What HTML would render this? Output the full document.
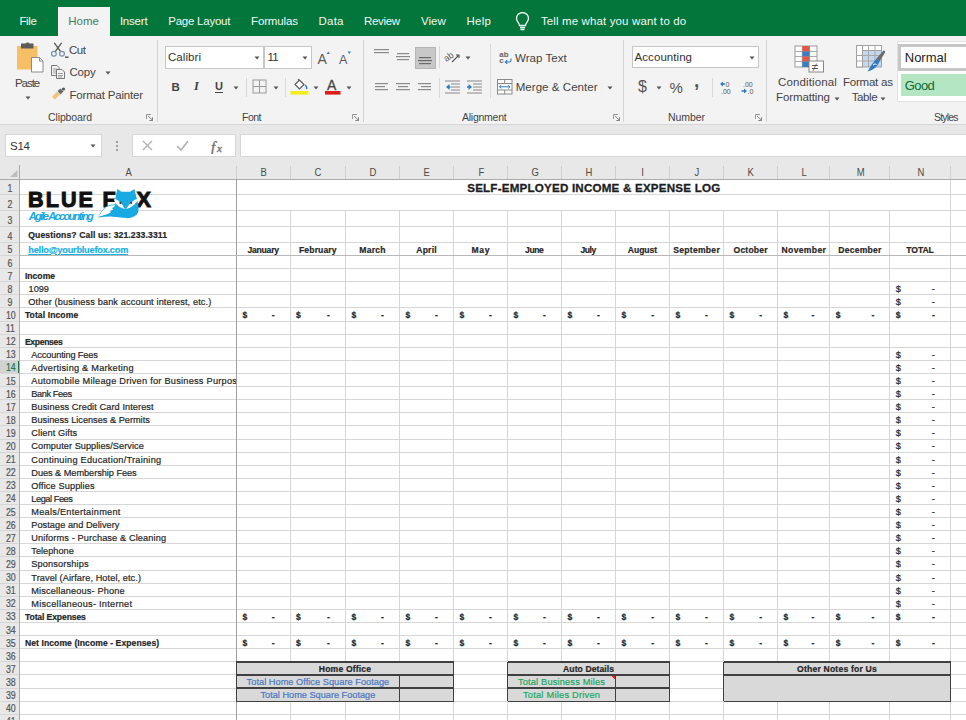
<!DOCTYPE html>
<html><head><meta charset="utf-8"><style>
html,body{margin:0;padding:0;}
body{width:966px;height:720px;overflow:hidden;position:relative;background:#fff;font-family:'Liberation Sans', sans-serif;}
</style></head><body>
<div style="position:absolute;left:0px;top:0px;width:966px;height:36px;background:#03763C;"></div><div style="position:absolute;left:58px;top:7px;width:52px;height:29px;background:#F3F3F3;"></div><div style="position:absolute;top:15.97px;font-size:11.5px;line-height:11.5px;font-weight:400;color:#F2F8F4;white-space:pre;letter-spacing:-0.410px;left:19.50px;">File</div><div style="position:absolute;top:15.97px;font-size:11.5px;line-height:11.5px;font-weight:400;color:#F2F8F4;white-space:pre;letter-spacing:-0.213px;left:119.90px;">Insert</div><div style="position:absolute;top:15.97px;font-size:11.5px;line-height:11.5px;font-weight:400;color:#F2F8F4;white-space:pre;letter-spacing:-0.249px;left:168.30px;">Page Layout</div><div style="position:absolute;top:15.97px;font-size:11.5px;line-height:11.5px;font-weight:400;color:#F2F8F4;white-space:pre;letter-spacing:-0.134px;left:251.00px;">Formulas</div><div style="position:absolute;top:15.97px;font-size:11.5px;line-height:11.5px;font-weight:400;color:#F2F8F4;white-space:pre;letter-spacing:0.201px;left:318.60px;">Data</div><div style="position:absolute;top:15.97px;font-size:11.5px;line-height:11.5px;font-weight:400;color:#F2F8F4;white-space:pre;letter-spacing:-0.344px;left:364.00px;">Review</div><div style="position:absolute;top:15.97px;font-size:11.5px;line-height:11.5px;font-weight:400;color:#F2F8F4;white-space:pre;letter-spacing:0.027px;left:421.00px;">View</div><div style="position:absolute;top:15.97px;font-size:11.5px;line-height:11.5px;font-weight:400;color:#F2F8F4;white-space:pre;letter-spacing:0.281px;left:466.50px;">Help</div><div style="position:absolute;top:15.97px;font-size:11.5px;line-height:11.5px;font-weight:400;color:#F2F8F4;white-space:pre;letter-spacing:0.130px;left:540.90px;">Tell me what you want to do</div><div style="position:absolute;top:15.97px;font-size:11.5px;line-height:11.5px;font-weight:400;color:#457C62;white-space:pre;letter-spacing:0.038px;left:68.20px;">Home</div><svg style="position:absolute;left:514px;top:12px" width="17" height="20" viewBox="0 0 17 20"><path d="M5.5 13.5 C5.5 11 2.5 9.5 2.5 6.5 A6 6 0 0 1 14.5 6.5 C14.5 9.5 11.5 11 11.5 13.5 Z" fill="none" stroke="#F2F8F4" stroke-width="1.3"/><path d="M6 15.5 H11 M6.5 17.5 H10.5" stroke="#F2F8F4" stroke-width="1.3"/></svg><div style="position:absolute;left:0px;top:36px;width:966px;height:88px;background:#F3F3F3;"></div><div style="position:absolute;left:0px;top:123.5px;width:966px;height:1.2px;background:#D6D6D6;"></div><div style="position:absolute;left:157px;top:40px;width:1px;height:82px;background:#D4D4D4;"></div><div style="position:absolute;left:363px;top:40px;width:1px;height:82px;background:#D4D4D4;"></div><div style="position:absolute;left:623px;top:40px;width:1px;height:82px;background:#D4D4D4;"></div><div style="position:absolute;left:766px;top:40px;width:1px;height:82px;background:#D4D4D4;"></div><svg style="position:absolute;left:14px;top:41px" width="32" height="33" viewBox="0 0 32 33">
<rect x="3" y="5" width="20.5" height="23.5" fill="#F6BF65"/>
<rect x="7" y="2.5" width="12.5" height="5" fill="#5B5B5B"/>
<rect x="11.5" y="1.5" width="4" height="3" rx="1.5" fill="#5B5B5B"/>
<path d="M17.5 16.5 H25.5 L29 20 V31 H17.5 Z" fill="#fff" stroke="#8C8C8C" stroke-width="1"/>
<path d="M25.5 16.5 V20 H29" fill="none" stroke="#8C8C8C" stroke-width="1"/>
</svg><div style="position:absolute;top:77.57px;font-size:11.5px;line-height:11.5px;font-weight:400;color:#444444;white-space:pre;letter-spacing:-1.055px;left:15.00px;">Paste</div><svg style="position:absolute;left:25px;top:96px" width="6" height="4"><path d="M0.5 0.5 H5.5 L3 3.5 Z" fill="#555"/></svg><svg style="position:absolute;left:50px;top:42px" width="20" height="16" viewBox="0 0 20 16">
<path d="M4.3 0.8 L10.8 9.8 M11.6 0.8 L5.1 9.8" stroke="#555" stroke-width="1.3"/>
<circle cx="3.9" cy="11.8" r="2.4" fill="none" stroke="#7B97AC" stroke-width="1.3"/>
<circle cx="12" cy="11.8" r="2.4" fill="none" stroke="#7B97AC" stroke-width="1.3"/>
<rect x="15" y="14.5" width="3.5" height="1.3" fill="#444"/>
</svg><div style="position:absolute;top:45.07px;font-size:11.5px;line-height:11.5px;font-weight:400;color:#444444;white-space:pre;letter-spacing:-0.453px;left:69.00px;">Cut</div><svg style="position:absolute;left:50px;top:64px" width="16" height="16" viewBox="0 0 16 16">
<path d="M1.5 1.5 H7 L9 3.5 V11.5 H1.5 Z" fill="#F3F3F3" stroke="#777" stroke-width="1"/>
<path d="M3 5 H7 M3 7 H7 M3 9 H6" stroke="#888" stroke-width="0.8"/>
<path d="M6.5 5.5 H12 L14.5 8 V14.5 H6.5 Z" fill="#F3F3F3" stroke="#777" stroke-width="1"/>
<path d="M8 9.5 H13 M8 11.5 H13 M8 13 H12" stroke="#888" stroke-width="0.8"/>
</svg><div style="position:absolute;top:66.87px;font-size:11.5px;line-height:11.5px;font-weight:400;color:#444444;white-space:pre;letter-spacing:-0.220px;left:69.50px;">Copy</div><svg style="position:absolute;left:105px;top:71px" width="6" height="4"><path d="M0.5 0.5 H5.5 L3 3.5 Z" fill="#555"/></svg><svg style="position:absolute;left:51px;top:87px" width="15" height="13" viewBox="0 0 15 13">
<path d="M1 10 L6 4.5 L9 7.5 L4 12.5 Z" fill="#F2C27A"/>
<path d="M6.5 4 L9.5 1.5 L12.5 4.5 L9.5 7.5 Z" fill="#6B6B6B"/>
<circle cx="12.5" cy="2" r="1.6" fill="#555"/>
</svg><div style="position:absolute;top:90.07px;font-size:11.5px;line-height:11.5px;font-weight:400;color:#444444;white-space:pre;letter-spacing:-0.197px;left:69.50px;">Format Painter</div><div style="position:absolute;top:111.61px;font-size:10.5px;line-height:10.5px;font-weight:400;color:#444444;white-space:pre;letter-spacing:-0.119px;left:48.00px;">Clipboard</div><svg style="position:absolute;left:146px;top:114px" width="8" height="7" viewBox="0 0 8 7"><path d="M0.5 5 V0.5 H5" stroke="#8A8A8A" stroke-width="0.9" fill="none"/><path d="M2 2 L6.5 6.2 M6.5 3.3 V6.5 H3.3" stroke="#777" stroke-width="0.9" fill="none"/></svg><div style="position:absolute;left:165px;top:46px;width:99px;height:22.5px;background:#FFFFFF;box-sizing:border-box;border:1px solid #C6C6C6;"></div><div style="position:absolute;left:264px;top:46px;width:48px;height:22.5px;background:#FFFFFF;box-sizing:border-box;border:1px solid #C6C6C6;"></div><div style="position:absolute;top:52.07px;font-size:11.5px;line-height:11.5px;font-weight:400;color:#333;white-space:pre;letter-spacing:0.068px;left:168.00px;">Calibri</div><div style="position:absolute;top:52.07px;font-size:11.5px;line-height:11.5px;font-weight:400;color:#333;white-space:pre;letter-spacing:-0.953px;left:267.60px;">11</div><svg style="position:absolute;left:254px;top:56px" width="6" height="4"><path d="M0.5 0.5 H5.5 L3 3.5 Z" fill="#555"/></svg><svg style="position:absolute;left:302px;top:56px" width="6" height="4"><path d="M0.5 0.5 H5.5 L3 3.5 Z" fill="#555"/></svg><svg style="position:absolute;left:316px;top:50px" width="38" height="16" viewBox="0 0 38 16">
<text x="1.5" y="13.5" font-family="Liberation Sans" font-size="14" fill="#5A5A5A">A</text>
<path d="M10.5 4 L12.3 1.5 L14 4 Z" fill="#3A7EC1"/>
<text x="23" y="14" font-family="Liberation Sans" font-size="12.5" fill="#5A5A5A">A</text>
<path d="M31.5 1.5 L33.3 4 L35 1.5 Z" fill="#3A7EC1"/>
</svg><div style="position:absolute;top:81.77px;font-size:11.5px;line-height:11.5px;font-weight:700;color:#444;white-space:pre;left:171.50px;">B</div><div style="position:absolute;left:194px;top:80px;font-family:'Liberation Serif';font-style:italic;font-size:12.5px;line-height:12.5px;color:#444;font-weight:bold">I</div><div style="position:absolute;top:81.19px;font-size:11px;line-height:11px;font-weight:700;color:#444;white-space:pre;text-decoration:underline;text-decoration-thickness:1px;text-underline-offset:1.5px;left:215.00px;">U</div><svg style="position:absolute;left:233px;top:86px" width="6" height="4"><path d="M0.5 0.5 H5.5 L3 3.5 Z" fill="#555"/></svg><div style="position:absolute;left:246px;top:78px;width:1px;height:19px;background:#D9D9D9;"></div><svg style="position:absolute;left:252px;top:79px" width="15" height="15" viewBox="0 0 15 15">
<rect x="1" y="1" width="13" height="13" fill="none" stroke="#9A9A9A" stroke-width="1"/>
<path d="M7.5 1 V14 M1 7.5 H14" stroke="#9A9A9A" stroke-width="1"/></svg><svg style="position:absolute;left:273px;top:86px" width="6" height="4"><path d="M0.5 0.5 H5.5 L3 3.5 Z" fill="#555"/></svg><div style="position:absolute;left:285px;top:78px;width:1px;height:19px;background:#D9D9D9;"></div><svg style="position:absolute;left:290px;top:78px" width="20" height="18" viewBox="0 0 20 18">
<path d="M5 6.5 L9.5 2 L14 6.5 L9.5 11 Z" fill="#fff" stroke="#555" stroke-width="1.1"/>
<path d="M8 1 L9.5 3" stroke="#555" stroke-width="1.1"/>
<path d="M15 7 Q17.5 9 16.5 11" stroke="#3A7EC1" stroke-width="1.5" fill="none"/>
<rect x="0.5" y="13" width="18" height="3.6" fill="#F2EE1A"/></svg><svg style="position:absolute;left:313px;top:86px" width="6" height="4"><path d="M0.5 0.5 H5.5 L3 3.5 Z" fill="#555"/></svg><svg style="position:absolute;left:324px;top:78px" width="18" height="18" viewBox="0 0 18 18">
<text x="3" y="12" font-family="Liberation Sans" font-size="14" fill="#444" stroke="#444" stroke-width="0.3">A</text>
<rect x="1" y="13" width="15.5" height="3.6" fill="#E01B1B"/></svg><svg style="position:absolute;left:346px;top:86px" width="6" height="4"><path d="M0.5 0.5 H5.5 L3 3.5 Z" fill="#555"/></svg><div style="position:absolute;top:111.61px;font-size:10.5px;line-height:10.5px;font-weight:400;color:#444444;white-space:pre;letter-spacing:-0.505px;left:242.00px;">Font</div><svg style="position:absolute;left:352px;top:114px" width="8" height="7" viewBox="0 0 8 7"><path d="M0.5 5 V0.5 H5" stroke="#8A8A8A" stroke-width="0.9" fill="none"/><path d="M2 2 L6.5 6.2 M6.5 3.3 V6.5 H3.3" stroke="#777" stroke-width="0.9" fill="none"/></svg><div style="position:absolute;left:414.5px;top:46.5px;width:21px;height:22px;background:#C8C8C8;box-sizing:border-box;border:1px solid #B4B4B4;"></div><svg style="position:absolute;left:374px;top:48px" width="15" height="16"><rect x="0" y="1" width="15" height="1.2" fill="#8A8A8A"/><rect x="0" y="4" width="15" height="1.2" fill="#8A8A8A"/></svg><svg style="position:absolute;left:396px;top:51px" width="14" height="16"><rect x="1" y="2" width="12" height="1.2" fill="#8A8A8A"/><rect x="0" y="5" width="14" height="1.2" fill="#8A8A8A"/><rect x="1" y="8" width="12" height="1.2" fill="#8A8A8A"/></svg><svg style="position:absolute;left:418px;top:53px" width="14" height="16"><rect x="1" y="4" width="12" height="1.2" fill="#6A6A6A"/><rect x="0" y="7" width="14" height="1.2" fill="#6A6A6A"/><rect x="1" y="10" width="12" height="1.2" fill="#6A6A6A"/></svg><svg style="position:absolute;left:444px;top:49px" width="18" height="16" viewBox="0 0 18 16">
<text x="0" y="10" font-family="Liberation Sans" font-size="9" fill="#555" transform="rotate(-35 6 8)">ab</text>
<path d="M8 13 L15 6 M12 6 H15 V9" stroke="#555" stroke-width="1.1" fill="none"/></svg><svg style="position:absolute;left:465px;top:56px" width="6" height="4"><path d="M0.5 0.5 H5.5 L3 3.5 Z" fill="#555"/></svg><div style="position:absolute;left:439px;top:46px;width:1px;height:22px;background:#D9D9D9;"></div><div style="position:absolute;left:439px;top:78px;width:1px;height:20px;background:#D9D9D9;"></div><div style="position:absolute;left:490px;top:44px;width:1px;height:54px;background:#D9D9D9;"></div><svg style="position:absolute;left:375px;top:82px" width="14" height="16"><rect x="0" y="1" width="13" height="1.2" fill="#8A8A8A"/><rect x="0" y="4" width="10" height="1.2" fill="#8A8A8A"/><rect x="0" y="7" width="13" height="1.2" fill="#8A8A8A"/></svg><svg style="position:absolute;left:396px;top:82px" width="14" height="16"><rect x="0" y="1" width="14" height="1.2" fill="#8A8A8A"/><rect x="2" y="4" width="10" height="1.2" fill="#8A8A8A"/><rect x="0" y="7" width="14" height="1.2" fill="#8A8A8A"/></svg><svg style="position:absolute;left:418px;top:82px" width="14" height="16"><rect x="0" y="1" width="13" height="1.2" fill="#8A8A8A"/><rect x="3" y="4" width="10" height="1.2" fill="#8A8A8A"/><rect x="0" y="7" width="13" height="1.2" fill="#8A8A8A"/></svg><svg style="position:absolute;left:445px;top:80px" width="16" height="14" viewBox="0 0 16 14">
<path d="M0 1 H15 M6 4 H15 M6 7 H15 M6 10 H15 M0 13 H15" stroke="#888" stroke-width="1"/>
<path d="M1 7 L4.5 4 V10 Z" fill="#2F7BC0"/><path d="M3 7 H5.5" stroke="#2F7BC0" stroke-width="1.5"/></svg><svg style="position:absolute;left:467px;top:80px" width="16" height="14" viewBox="0 0 16 14">
<path d="M0 1 H15 M6 4 H15 M6 7 H15 M6 10 H15 M0 13 H15" stroke="#888" stroke-width="1"/>
<path d="M5 7 L1.5 4 V10 Z" fill="#2F7BC0"/><path d="M0 7 H3" stroke="#2F7BC0" stroke-width="1.5"/></svg><svg style="position:absolute;left:498px;top:50px" width="16" height="16" viewBox="0 0 16 16">
<text x="1.3" y="7" font-family="Liberation Sans" font-size="8" font-weight="bold" fill="#666">ab</text>
<text x="1.3" y="13" font-family="Liberation Sans" font-size="8" font-weight="bold" fill="#666">c</text>
<path d="M13 8.5 V10.5 Q13 12 11.5 12 H7.5 M9.3 10.2 L7.3 12 L9.3 13.8" stroke="#2F7BC0" stroke-width="1.1" fill="none"/></svg><div style="position:absolute;top:52.77px;font-size:11.5px;line-height:11.5px;font-weight:400;color:#444444;white-space:pre;letter-spacing:0.055px;left:515.00px;">Wrap Text</div><svg style="position:absolute;left:497px;top:79px" width="16" height="16" viewBox="0 0 16 16">
<rect x="0.5" y="0.5" width="14.5" height="14.5" fill="#fff" stroke="#888" stroke-width="1"/>
<path d="M0.5 4.5 H15 M0.5 11 H15 M7.7 0.5 V4.5 M7.7 11 V15" stroke="#888" stroke-width="1"/>
<path d="M2.5 7.8 H13 M4.3 6.2 L2.5 7.8 L4.3 9.4 M11.2 6.2 L13 7.8 L11.2 9.4" stroke="#2F7BC0" stroke-width="1" fill="none"/></svg><div style="position:absolute;top:82.47px;font-size:11.5px;line-height:11.5px;font-weight:400;color:#444444;white-space:pre;letter-spacing:0.055px;left:515.70px;">Merge &amp; Center</div><svg style="position:absolute;left:607px;top:86px" width="6" height="4"><path d="M0.5 0.5 H5.5 L3 3.5 Z" fill="#555"/></svg><div style="position:absolute;top:111.61px;font-size:10.5px;line-height:10.5px;font-weight:400;color:#444444;white-space:pre;letter-spacing:-0.250px;left:462.00px;">Alignment</div><svg style="position:absolute;left:613px;top:114px" width="8" height="7" viewBox="0 0 8 7"><path d="M0.5 5 V0.5 H5" stroke="#8A8A8A" stroke-width="0.9" fill="none"/><path d="M2 2 L6.5 6.2 M6.5 3.3 V6.5 H3.3" stroke="#777" stroke-width="0.9" fill="none"/></svg><div style="position:absolute;left:632px;top:46.3px;width:127px;height:22px;background:#FFFFFF;box-sizing:border-box;border:1px solid #C6C6C6;"></div><div style="position:absolute;top:51.97px;font-size:11.5px;line-height:11.5px;font-weight:400;color:#333;white-space:pre;letter-spacing:0.055px;left:634.60px;">Accounting</div><svg style="position:absolute;left:749px;top:56px" width="6" height="4"><path d="M0.5 0.5 H5.5 L3 3.5 Z" fill="#555"/></svg><div style="position:absolute;top:79.46px;font-size:16px;line-height:16px;font-weight:400;color:#555;white-space:pre;letter-spacing:-0.406px;left:638.00px;">$</div><svg style="position:absolute;left:656px;top:86px" width="6" height="4"><path d="M0.5 0.5 H5.5 L3 3.5 Z" fill="#555"/></svg><div style="position:absolute;top:80.30px;font-size:15px;line-height:15px;font-weight:400;color:#555;white-space:pre;letter-spacing:-0.344px;left:669.50px;">%</div><div style="position:absolute;top:70.92px;font-size:19px;line-height:19px;font-weight:700;color:#555;white-space:pre;left:694.00px;">,</div><div style="position:absolute;left:712px;top:78px;width:1px;height:19px;background:#D9D9D9;"></div><svg style="position:absolute;left:719px;top:80px" width="14" height="15" viewBox="0 0 14 15">
<path d="M1 4 L4 1.5 V6.5 Z" fill="#2F7BC0"/><path d="M3 4 H6" stroke="#2F7BC0" stroke-width="1.5"/>
<text x="6.5" y="7" font-family="Liberation Sans" font-size="7" fill="#555">0</text>
<text x="2" y="14" font-family="Liberation Sans" font-size="7" fill="#555">.00</text></svg><svg style="position:absolute;left:741px;top:80px" width="14" height="15" viewBox="0 0 14 15">
<text x="2" y="7" font-family="Liberation Sans" font-size="7" fill="#555">.00</text>
<path d="M6 11 L3 8.5 V13.5 Z" transform="translate(0,0)" fill="#2F7BC0"/>
<path d="M0.5 11 H4" stroke="#2F7BC0" stroke-width="1.5"/>
<text x="6.5" y="14" font-family="Liberation Sans" font-size="7" fill="#555">.0</text></svg><div style="position:absolute;top:111.61px;font-size:10.5px;line-height:10.5px;font-weight:400;color:#444444;white-space:pre;letter-spacing:-0.072px;left:668.00px;">Number</div><svg style="position:absolute;left:755px;top:114px" width="8" height="7" viewBox="0 0 8 7"><path d="M0.5 5 V0.5 H5" stroke="#8A8A8A" stroke-width="0.9" fill="none"/><path d="M2 2 L6.5 6.2 M6.5 3.3 V6.5 H3.3" stroke="#777" stroke-width="0.9" fill="none"/></svg><svg style="position:absolute;left:794px;top:45px" width="32" height="28" viewBox="0 0 32 28">
<rect x="1" y="1" width="22" height="21" fill="#fff" stroke="#999" stroke-width="1"/>
<path d="M1 6.5 H23 M1 11.5 H23 M1 16.5 H23 M8.3 1 V22 M15.6 1 V22" stroke="#AAA" stroke-width="1"/>
<rect x="8.3" y="1" width="7.3" height="5.5" fill="#E2574C"/>
<rect x="8.3" y="6.5" width="7.3" height="5" fill="#3A7EC1"/>
<rect x="8.3" y="11.5" width="7.3" height="5" fill="#E2574C"/>
<rect x="8.3" y="16.5" width="7.3" height="5.5" fill="#3A7EC1"/>
<rect x="15" y="16" width="14.5" height="11" fill="#fff" stroke="#888" stroke-width="1"/>
<text x="17.8" y="25.5" font-family="Liberation Sans" font-size="12" fill="#555">≠</text></svg><div style="position:absolute;top:77.27px;font-size:11.5px;line-height:11.5px;font-weight:400;color:#444444;white-space:pre;letter-spacing:0.125px;left:778.00px;">Conditional</div><div style="position:absolute;top:92.07px;font-size:11.5px;line-height:11.5px;font-weight:400;color:#444444;white-space:pre;letter-spacing:-0.108px;left:776.00px;">Formatting</div><svg style="position:absolute;left:834px;top:97px" width="6" height="4"><path d="M0.5 0.5 H5.5 L3 3.5 Z" fill="#555"/></svg><svg style="position:absolute;left:854px;top:44px" width="34" height="30" viewBox="0 0 34 30">
<rect x="2.5" y="1.5" width="25" height="21.5" fill="#C5D7EC" stroke="#A0A0A0" stroke-width="1"/>
<rect x="2.5" y="1.5" width="25" height="5" fill="#fff" stroke="#A0A0A0" stroke-width="1"/>
<rect x="2.5" y="1.5" width="6" height="21.5" fill="#fff" stroke="#A0A0A0" stroke-width="1"/>
<path d="M2.5 11.5 H27.5 M2.5 17 H27.5 M14.5 1.5 V23 M21 1.5 V23" stroke="#A8A8A8" stroke-width="1"/>
<path d="M22.5 14.5 L29.5 6.5 Q31.5 6 31 8.5 L25.5 17.5 Z" fill="#6B6B6B"/>
<path d="M22.5 14.5 L25.5 17.5 Q22.5 25.5 13.5 27.5 Q17 21 22.5 14.5 Z" fill="#2F7BC0"/>
<path d="M19 21 Q21.5 19 22.5 20.5" stroke="#fff" stroke-width="1" fill="none"/>
</svg><div style="position:absolute;top:77.27px;font-size:11.5px;line-height:11.5px;font-weight:400;color:#444444;white-space:pre;letter-spacing:-0.221px;left:843.00px;">Format as</div><div style="position:absolute;top:92.07px;font-size:11.5px;line-height:11.5px;font-weight:400;color:#444444;white-space:pre;letter-spacing:-0.375px;left:851.70px;">Table</div><svg style="position:absolute;left:880px;top:97px" width="6" height="4"><path d="M0.5 0.5 H5.5 L3 3.5 Z" fill="#555"/></svg><div style="position:absolute;left:897px;top:41px;width:69px;height:61px;background:#FFFFFF;box-sizing:border-box;border:1px solid #E1E1E1;border-right:none;"></div><div style="position:absolute;left:897.5px;top:44px;width:69px;height:27px;background:#FFFFFF;box-sizing:border-box;border:3px solid #C6C6C6;border-right:none;"></div><div style="position:absolute;top:51.30px;font-size:13px;line-height:13px;font-weight:400;color:#222;white-space:pre;letter-spacing:-0.021px;left:904.80px;">Normal</div><div style="position:absolute;left:900.5px;top:74px;width:66px;height:22px;background:#B5E6C3;"></div><div style="position:absolute;top:78.80px;font-size:13px;line-height:13px;font-weight:400;color:#0B6B34;white-space:pre;letter-spacing:-0.604px;left:904.80px;">Good</div><div style="position:absolute;top:111.61px;font-size:10.5px;line-height:10.5px;font-weight:400;color:#444444;white-space:pre;letter-spacing:-0.819px;left:934.00px;">Styles</div><div style="position:absolute;left:0px;top:124.7px;width:966px;height:40.3px;background:#E8E8E8;"></div><div style="position:absolute;left:5px;top:134px;width:97px;height:23px;background:#FFFFFF;box-sizing:border-box;border:1px solid #D6D6D6;"></div><div style="position:absolute;top:140.77px;font-size:11.5px;line-height:11.5px;font-weight:400;color:#333;white-space:pre;letter-spacing:-0.234px;left:10.00px;">S14</div><svg style="position:absolute;left:90px;top:144px" width="6" height="4"><path d="M0.5 0.5 H5.5 L3 3.5 Z" fill="#555"/></svg><div style="position:absolute;left:116px;top:141px;width:2px;height:2px;background:#A0A0A0;"></div><div style="position:absolute;left:116px;top:145px;width:2px;height:2px;background:#A0A0A0;"></div><div style="position:absolute;left:116px;top:149px;width:2px;height:2px;background:#A0A0A0;"></div><div style="position:absolute;left:132px;top:134px;width:104px;height:23px;background:#FFFFFF;box-sizing:border-box;border:1px solid #D6D6D6;"></div><svg style="position:absolute;left:140px;top:138px" width="90" height="16" viewBox="0 0 90 16">
<path d="M3 3 L12 12 M12 3 L3 12" stroke="#B0B0B0" stroke-width="1.3"/>
<path d="M37 8 L41 12 L48 3" stroke="#B0B0B0" stroke-width="1.5" fill="none"/>
<text x="71" y="13.5" font-family="Liberation Serif" font-style="italic" font-size="15" fill="#6A6A6A" stroke="#6A6A6A" stroke-width="0.3">f</text>
<text x="77" y="13.5" font-family="Liberation Serif" font-style="italic" font-size="11" fill="#6A6A6A" stroke="#6A6A6A" stroke-width="0.3">x</text></svg><div style="position:absolute;left:239.5px;top:134px;width:730px;height:23px;background:#FFFFFF;box-sizing:border-box;border:1px solid #D6D6D6;"></div><div style="position:absolute;left:0px;top:165px;width:966px;height:14px;background:#E8E8E8;"></div><div style="position:absolute;left:0px;top:179px;width:19.5px;height:541px;background:#E8E8E8;"></div><div style="position:absolute;left:0px;top:360.372px;width:18px;height:13.108000000000004px;background:#D2D2D2;"></div><div style="position:absolute;left:18px;top:360.372px;width:2.2px;height:13.108000000000004px;background:#217346;"></div><div style="position:absolute;left:20px;top:179px;width:946px;height:541px;background:#FFFFFF;"></div><svg style="position:absolute;left:0;top:0" width="966" height="720" shape-rendering="crispEdges"><rect x="0.00" y="193.90" width="966.00" height="1" fill="#D6D6D6"/><rect x="0.00" y="210.00" width="966.00" height="1" fill="#D6D6D6"/><rect x="0.00" y="226.00" width="966.00" height="1" fill="#D6D6D6"/><rect x="0.00" y="241.90" width="966.00" height="1" fill="#D6D6D6"/><rect x="0.00" y="255.01" width="966.00" height="1" fill="#D6D6D6"/><rect x="0.00" y="268.12" width="966.00" height="1" fill="#D6D6D6"/><rect x="0.00" y="281.22" width="966.00" height="1" fill="#D6D6D6"/><rect x="0.00" y="294.33" width="966.00" height="1" fill="#D6D6D6"/><rect x="0.00" y="307.44" width="966.00" height="1" fill="#D6D6D6"/><rect x="0.00" y="320.55" width="966.00" height="1" fill="#D6D6D6"/><rect x="0.00" y="333.66" width="966.00" height="1" fill="#D6D6D6"/><rect x="0.00" y="346.76" width="966.00" height="1" fill="#D6D6D6"/><rect x="0.00" y="359.87" width="966.00" height="1" fill="#D6D6D6"/><rect x="0.00" y="372.98" width="966.00" height="1" fill="#D6D6D6"/><rect x="0.00" y="386.09" width="966.00" height="1" fill="#D6D6D6"/><rect x="0.00" y="399.20" width="966.00" height="1" fill="#D6D6D6"/><rect x="0.00" y="412.30" width="966.00" height="1" fill="#D6D6D6"/><rect x="0.00" y="425.41" width="966.00" height="1" fill="#D6D6D6"/><rect x="0.00" y="438.52" width="966.00" height="1" fill="#D6D6D6"/><rect x="0.00" y="451.63" width="966.00" height="1" fill="#D6D6D6"/><rect x="0.00" y="464.74" width="966.00" height="1" fill="#D6D6D6"/><rect x="0.00" y="477.84" width="966.00" height="1" fill="#D6D6D6"/><rect x="0.00" y="490.95" width="966.00" height="1" fill="#D6D6D6"/><rect x="0.00" y="504.06" width="966.00" height="1" fill="#D6D6D6"/><rect x="0.00" y="517.17" width="966.00" height="1" fill="#D6D6D6"/><rect x="0.00" y="530.28" width="966.00" height="1" fill="#D6D6D6"/><rect x="0.00" y="543.38" width="966.00" height="1" fill="#D6D6D6"/><rect x="0.00" y="556.49" width="966.00" height="1" fill="#D6D6D6"/><rect x="0.00" y="569.60" width="966.00" height="1" fill="#D6D6D6"/><rect x="0.00" y="582.71" width="966.00" height="1" fill="#D6D6D6"/><rect x="0.00" y="595.82" width="966.00" height="1" fill="#D6D6D6"/><rect x="0.00" y="608.92" width="966.00" height="1" fill="#D6D6D6"/><rect x="0.00" y="622.03" width="966.00" height="1" fill="#D6D6D6"/><rect x="0.00" y="635.14" width="966.00" height="1" fill="#D6D6D6"/><rect x="0.00" y="648.25" width="966.00" height="1" fill="#D6D6D6"/><rect x="0.00" y="661.36" width="966.00" height="1" fill="#D6D6D6"/><rect x="0.00" y="674.46" width="966.00" height="1" fill="#D6D6D6"/><rect x="0.00" y="687.57" width="966.00" height="1" fill="#D6D6D6"/><rect x="0.00" y="700.68" width="966.00" height="1" fill="#D6D6D6"/><rect x="0.00" y="713.79" width="966.00" height="1" fill="#D6D6D6"/><rect x="0.00" y="726.90" width="966.00" height="1" fill="#D6D6D6"/><rect x="289.60" y="210.50" width="1" height="509.50" fill="#D6D6D6"/><rect x="345.00" y="210.50" width="1" height="509.50" fill="#D6D6D6"/><rect x="398.90" y="210.50" width="1" height="509.50" fill="#D6D6D6"/><rect x="453.00" y="210.50" width="1" height="509.50" fill="#D6D6D6"/><rect x="507.00" y="210.50" width="1" height="509.50" fill="#D6D6D6"/><rect x="560.90" y="210.50" width="1" height="509.50" fill="#D6D6D6"/><rect x="614.90" y="210.50" width="1" height="509.50" fill="#D6D6D6"/><rect x="669.10" y="210.50" width="1" height="509.50" fill="#D6D6D6"/><rect x="723.00" y="210.50" width="1" height="509.50" fill="#D6D6D6"/><rect x="777.10" y="210.50" width="1" height="509.50" fill="#D6D6D6"/><rect x="829.30" y="210.50" width="1" height="509.50" fill="#D6D6D6"/><rect x="889.30" y="210.50" width="1" height="509.50" fill="#D6D6D6"/><rect x="949.80" y="179.00" width="1" height="541.00" fill="#D6D6D6"/><rect x="235.90" y="166.00" width="1" height="13.00" fill="#CFCFCF"/><rect x="289.60" y="166.00" width="1" height="13.00" fill="#CFCFCF"/><rect x="345.00" y="166.00" width="1" height="13.00" fill="#CFCFCF"/><rect x="398.90" y="166.00" width="1" height="13.00" fill="#CFCFCF"/><rect x="453.00" y="166.00" width="1" height="13.00" fill="#CFCFCF"/><rect x="507.00" y="166.00" width="1" height="13.00" fill="#CFCFCF"/><rect x="560.90" y="166.00" width="1" height="13.00" fill="#CFCFCF"/><rect x="614.90" y="166.00" width="1" height="13.00" fill="#CFCFCF"/><rect x="669.10" y="166.00" width="1" height="13.00" fill="#CFCFCF"/><rect x="723.00" y="166.00" width="1" height="13.00" fill="#CFCFCF"/><rect x="777.10" y="166.00" width="1" height="13.00" fill="#CFCFCF"/><rect x="829.30" y="166.00" width="1" height="13.00" fill="#CFCFCF"/><rect x="889.30" y="166.00" width="1" height="13.00" fill="#CFCFCF"/><rect x="949.80" y="166.00" width="1" height="13.00" fill="#CFCFCF"/><rect x="0.00" y="178.50" width="966.00" height="1" fill="#ABABAB"/><rect x="19.00" y="165.00" width="1" height="555.00" fill="#ABABAB"/><rect x="235.80" y="179.00" width="1.2" height="541.00" fill="#9E9E9E"/><rect x="19.50" y="255.01" width="946.50" height="1" fill="#B8B8B8"/><rect x="236.40" y="661.86" width="217.10" height="39.32" fill="#D9D9D9"/><rect x="236.40" y="661.21" width="217.10" height="1.3" fill="#404040"/><rect x="236.40" y="674.31" width="217.10" height="1.3" fill="#404040"/><rect x="235.75" y="661.86" width="1.3" height="13.11" fill="#404040"/><rect x="452.85" y="661.21" width="1.3" height="14.41" fill="#404040"/><rect x="236.40" y="674.31" width="163.00" height="1.3" fill="#404040"/><rect x="236.40" y="687.42" width="163.00" height="1.3" fill="#404040"/><rect x="235.75" y="674.96" width="1.3" height="13.11" fill="#404040"/><rect x="398.75" y="674.31" width="1.3" height="14.41" fill="#404040"/><rect x="399.40" y="674.31" width="54.10" height="1.3" fill="#404040"/><rect x="399.40" y="687.42" width="54.10" height="1.3" fill="#404040"/><rect x="398.75" y="674.96" width="1.3" height="13.11" fill="#404040"/><rect x="452.85" y="674.31" width="1.3" height="14.41" fill="#404040"/><rect x="236.40" y="687.42" width="163.00" height="1.3" fill="#404040"/><rect x="236.40" y="700.53" width="163.00" height="1.3" fill="#404040"/><rect x="235.75" y="688.07" width="1.3" height="13.11" fill="#404040"/><rect x="398.75" y="687.42" width="1.3" height="14.41" fill="#404040"/><rect x="399.40" y="687.42" width="54.10" height="1.3" fill="#404040"/><rect x="399.40" y="700.53" width="54.10" height="1.3" fill="#404040"/><rect x="398.75" y="688.07" width="1.3" height="13.11" fill="#404040"/><rect x="452.85" y="687.42" width="1.3" height="14.41" fill="#404040"/><rect x="507.50" y="661.86" width="162.10" height="39.32" fill="#D9D9D9"/><rect x="507.50" y="661.21" width="162.10" height="1.3" fill="#404040"/><rect x="507.50" y="674.31" width="162.10" height="1.3" fill="#404040"/><rect x="506.85" y="661.86" width="1.3" height="13.11" fill="#404040"/><rect x="668.95" y="661.21" width="1.3" height="14.41" fill="#404040"/><rect x="507.50" y="674.31" width="107.90" height="1.3" fill="#404040"/><rect x="507.50" y="687.42" width="107.90" height="1.3" fill="#404040"/><rect x="506.85" y="674.96" width="1.3" height="13.11" fill="#404040"/><rect x="614.75" y="674.31" width="1.3" height="14.41" fill="#404040"/><rect x="615.40" y="674.31" width="54.20" height="1.3" fill="#404040"/><rect x="615.40" y="687.42" width="54.20" height="1.3" fill="#404040"/><rect x="614.75" y="674.96" width="1.3" height="13.11" fill="#404040"/><rect x="668.95" y="674.31" width="1.3" height="14.41" fill="#404040"/><rect x="507.50" y="687.42" width="107.90" height="1.3" fill="#404040"/><rect x="507.50" y="700.53" width="107.90" height="1.3" fill="#404040"/><rect x="506.85" y="688.07" width="1.3" height="13.11" fill="#404040"/><rect x="614.75" y="687.42" width="1.3" height="14.41" fill="#404040"/><rect x="615.40" y="687.42" width="54.20" height="1.3" fill="#404040"/><rect x="615.40" y="700.53" width="54.20" height="1.3" fill="#404040"/><rect x="614.75" y="688.07" width="1.3" height="13.11" fill="#404040"/><rect x="668.95" y="687.42" width="1.3" height="14.41" fill="#404040"/><path d="M611.40 675.76 H614.90 V679.26 Z" fill="#E02020"/><rect x="723.50" y="661.86" width="226.80" height="39.32" fill="#D9D9D9"/><rect x="723.50" y="661.21" width="226.80" height="1.3" fill="#404040"/><rect x="723.50" y="674.31" width="226.80" height="1.3" fill="#404040"/><rect x="722.85" y="661.86" width="1.3" height="13.11" fill="#404040"/><rect x="949.65" y="661.21" width="1.3" height="14.41" fill="#404040"/><rect x="723.50" y="674.31" width="226.80" height="1.3" fill="#404040"/><rect x="723.50" y="700.53" width="226.80" height="1.3" fill="#404040"/><rect x="722.85" y="674.96" width="1.3" height="26.22" fill="#404040"/><rect x="949.65" y="674.31" width="1.3" height="27.52" fill="#404040"/></svg><svg style="position:absolute;left:10px;top:170px" width="8" height="8"><path d="M7.5 0 V7 H0 Z" fill="#BDBDBD"/></svg><div style="position:absolute;top:167.29px;font-size:11px;line-height:11px;font-weight:400;color:#4A4A4A;white-space:pre;transform:scaleX(0.86);transform-origin:50% 50%;left:124.79px;">A</div><div style="position:absolute;top:167.29px;font-size:11px;line-height:11px;font-weight:400;color:#4A4A4A;white-space:pre;transform:scaleX(0.86);transform-origin:50% 50%;left:260.09px;">B</div><div style="position:absolute;top:167.29px;font-size:11px;line-height:11px;font-weight:400;color:#4A4A4A;white-space:pre;transform:scaleX(0.86);transform-origin:50% 50%;left:314.38px;">C</div><div style="position:absolute;top:167.29px;font-size:11px;line-height:11px;font-weight:400;color:#4A4A4A;white-space:pre;transform:scaleX(0.86);transform-origin:50% 50%;left:369.03px;">D</div><div style="position:absolute;top:167.29px;font-size:11px;line-height:11px;font-weight:400;color:#4A4A4A;white-space:pre;transform:scaleX(0.86);transform-origin:50% 50%;left:423.29px;">E</div><div style="position:absolute;top:167.29px;font-size:11px;line-height:11px;font-weight:400;color:#4A4A4A;white-space:pre;transform:scaleX(0.86);transform-origin:50% 50%;left:477.60px;">F</div><div style="position:absolute;top:167.29px;font-size:11px;line-height:11px;font-weight:400;color:#4A4A4A;white-space:pre;transform:scaleX(0.86);transform-origin:50% 50%;left:530.77px;">G</div><div style="position:absolute;top:167.29px;font-size:11px;line-height:11px;font-weight:400;color:#4A4A4A;white-space:pre;transform:scaleX(0.86);transform-origin:50% 50%;left:584.98px;">H</div><div style="position:absolute;top:167.29px;font-size:11px;line-height:11px;font-weight:400;color:#4A4A4A;white-space:pre;transform:scaleX(0.86);transform-origin:50% 50%;left:641.18px;">I</div><div style="position:absolute;top:167.29px;font-size:11px;line-height:11px;font-weight:400;color:#4A4A4A;white-space:pre;transform:scaleX(0.86);transform-origin:50% 50%;left:694.19px;">J</div><div style="position:absolute;top:167.29px;font-size:11px;line-height:11px;font-weight:400;color:#4A4A4A;white-space:pre;transform:scaleX(0.86);transform-origin:50% 50%;left:747.39px;">K</div><div style="position:absolute;top:167.29px;font-size:11px;line-height:11px;font-weight:400;color:#4A4A4A;white-space:pre;transform:scaleX(0.86);transform-origin:50% 50%;left:801.07px;">L</div><div style="position:absolute;top:167.29px;font-size:11px;line-height:11px;font-weight:400;color:#4A4A4A;white-space:pre;transform:scaleX(0.86);transform-origin:50% 50%;left:855.86px;">M</div><div style="position:absolute;top:167.29px;font-size:11px;line-height:11px;font-weight:400;color:#4A4A4A;white-space:pre;transform:scaleX(0.86);transform-origin:50% 50%;left:916.63px;">N</div><div style="position:absolute;top:182.61px;font-size:10.5px;line-height:10.5px;font-weight:400;color:#555555;white-space:pre;-webkit-text-stroke:0.2px #555555;transform:scaleX(0.84);transform-origin:50% 50%;left:7.25px;">1</div><div style="position:absolute;top:198.71px;font-size:10.5px;line-height:10.5px;font-weight:400;color:#555555;white-space:pre;-webkit-text-stroke:0.2px #555555;transform:scaleX(0.84);transform-origin:50% 50%;left:7.25px;">2</div><div style="position:absolute;top:214.71px;font-size:10.5px;line-height:10.5px;font-weight:400;color:#555555;white-space:pre;-webkit-text-stroke:0.2px #555555;transform:scaleX(0.84);transform-origin:50% 50%;left:7.25px;">3</div><div style="position:absolute;top:230.61px;font-size:10.5px;line-height:10.5px;font-weight:400;color:#555555;white-space:pre;-webkit-text-stroke:0.2px #555555;transform:scaleX(0.84);transform-origin:50% 50%;left:7.25px;">4</div><div style="position:absolute;top:244.42px;font-size:10.5px;line-height:10.5px;font-weight:400;color:#555555;white-space:pre;-webkit-text-stroke:0.2px #555555;transform:scaleX(0.84);transform-origin:50% 50%;left:7.25px;">5</div><div style="position:absolute;top:257.53px;font-size:10.5px;line-height:10.5px;font-weight:400;color:#555555;white-space:pre;-webkit-text-stroke:0.2px #555555;transform:scaleX(0.84);transform-origin:50% 50%;left:7.25px;">6</div><div style="position:absolute;top:270.64px;font-size:10.5px;line-height:10.5px;font-weight:400;color:#555555;white-space:pre;-webkit-text-stroke:0.2px #555555;transform:scaleX(0.84);transform-origin:50% 50%;left:7.25px;">7</div><div style="position:absolute;top:283.74px;font-size:10.5px;line-height:10.5px;font-weight:400;color:#555555;white-space:pre;-webkit-text-stroke:0.2px #555555;transform:scaleX(0.84);transform-origin:50% 50%;left:7.25px;">8</div><div style="position:absolute;top:296.85px;font-size:10.5px;line-height:10.5px;font-weight:400;color:#555555;white-space:pre;-webkit-text-stroke:0.2px #555555;transform:scaleX(0.84);transform-origin:50% 50%;left:7.25px;">9</div><div style="position:absolute;top:309.96px;font-size:10.5px;line-height:10.5px;font-weight:400;color:#555555;white-space:pre;-webkit-text-stroke:0.2px #555555;transform:scaleX(0.84);transform-origin:50% 50%;left:4.79px;">10</div><div style="position:absolute;top:323.07px;font-size:10.5px;line-height:10.5px;font-weight:400;color:#555555;white-space:pre;-webkit-text-stroke:0.2px #555555;transform:scaleX(0.84);transform-origin:50% 50%;left:5.12px;">11</div><div style="position:absolute;top:336.18px;font-size:10.5px;line-height:10.5px;font-weight:400;color:#555555;white-space:pre;-webkit-text-stroke:0.2px #555555;transform:scaleX(0.84);transform-origin:50% 50%;left:4.79px;">12</div><div style="position:absolute;top:349.28px;font-size:10.5px;line-height:10.5px;font-weight:400;color:#555555;white-space:pre;-webkit-text-stroke:0.2px #555555;transform:scaleX(0.84);transform-origin:50% 50%;left:4.79px;">13</div><div style="position:absolute;top:362.39px;font-size:10.5px;line-height:10.5px;font-weight:400;color:#217346;white-space:pre;-webkit-text-stroke:0.2px #217346;transform:scaleX(0.84);transform-origin:50% 50%;left:4.79px;">14</div><div style="position:absolute;top:375.50px;font-size:10.5px;line-height:10.5px;font-weight:400;color:#555555;white-space:pre;-webkit-text-stroke:0.2px #555555;transform:scaleX(0.84);transform-origin:50% 50%;left:4.79px;">15</div><div style="position:absolute;top:388.61px;font-size:10.5px;line-height:10.5px;font-weight:400;color:#555555;white-space:pre;-webkit-text-stroke:0.2px #555555;transform:scaleX(0.84);transform-origin:50% 50%;left:4.79px;">16</div><div style="position:absolute;top:401.72px;font-size:10.5px;line-height:10.5px;font-weight:400;color:#555555;white-space:pre;-webkit-text-stroke:0.2px #555555;transform:scaleX(0.84);transform-origin:50% 50%;left:4.79px;">17</div><div style="position:absolute;top:414.82px;font-size:10.5px;line-height:10.5px;font-weight:400;color:#555555;white-space:pre;-webkit-text-stroke:0.2px #555555;transform:scaleX(0.84);transform-origin:50% 50%;left:4.79px;">18</div><div style="position:absolute;top:427.93px;font-size:10.5px;line-height:10.5px;font-weight:400;color:#555555;white-space:pre;-webkit-text-stroke:0.2px #555555;transform:scaleX(0.84);transform-origin:50% 50%;left:4.79px;">19</div><div style="position:absolute;top:441.04px;font-size:10.5px;line-height:10.5px;font-weight:400;color:#555555;white-space:pre;-webkit-text-stroke:0.2px #555555;transform:scaleX(0.84);transform-origin:50% 50%;left:4.79px;">20</div><div style="position:absolute;top:454.15px;font-size:10.5px;line-height:10.5px;font-weight:400;color:#555555;white-space:pre;-webkit-text-stroke:0.2px #555555;transform:scaleX(0.84);transform-origin:50% 50%;left:4.79px;">21</div><div style="position:absolute;top:467.26px;font-size:10.5px;line-height:10.5px;font-weight:400;color:#555555;white-space:pre;-webkit-text-stroke:0.2px #555555;transform:scaleX(0.84);transform-origin:50% 50%;left:4.79px;">22</div><div style="position:absolute;top:480.36px;font-size:10.5px;line-height:10.5px;font-weight:400;color:#555555;white-space:pre;-webkit-text-stroke:0.2px #555555;transform:scaleX(0.84);transform-origin:50% 50%;left:4.79px;">23</div><div style="position:absolute;top:493.47px;font-size:10.5px;line-height:10.5px;font-weight:400;color:#555555;white-space:pre;-webkit-text-stroke:0.2px #555555;transform:scaleX(0.84);transform-origin:50% 50%;left:4.79px;">24</div><div style="position:absolute;top:506.58px;font-size:10.5px;line-height:10.5px;font-weight:400;color:#555555;white-space:pre;-webkit-text-stroke:0.2px #555555;transform:scaleX(0.84);transform-origin:50% 50%;left:4.79px;">25</div><div style="position:absolute;top:519.69px;font-size:10.5px;line-height:10.5px;font-weight:400;color:#555555;white-space:pre;-webkit-text-stroke:0.2px #555555;transform:scaleX(0.84);transform-origin:50% 50%;left:4.79px;">26</div><div style="position:absolute;top:532.80px;font-size:10.5px;line-height:10.5px;font-weight:400;color:#555555;white-space:pre;-webkit-text-stroke:0.2px #555555;transform:scaleX(0.84);transform-origin:50% 50%;left:4.79px;">27</div><div style="position:absolute;top:545.90px;font-size:10.5px;line-height:10.5px;font-weight:400;color:#555555;white-space:pre;-webkit-text-stroke:0.2px #555555;transform:scaleX(0.84);transform-origin:50% 50%;left:4.79px;">28</div><div style="position:absolute;top:559.01px;font-size:10.5px;line-height:10.5px;font-weight:400;color:#555555;white-space:pre;-webkit-text-stroke:0.2px #555555;transform:scaleX(0.84);transform-origin:50% 50%;left:4.79px;">29</div><div style="position:absolute;top:572.12px;font-size:10.5px;line-height:10.5px;font-weight:400;color:#555555;white-space:pre;-webkit-text-stroke:0.2px #555555;transform:scaleX(0.84);transform-origin:50% 50%;left:4.79px;">30</div><div style="position:absolute;top:585.23px;font-size:10.5px;line-height:10.5px;font-weight:400;color:#555555;white-space:pre;-webkit-text-stroke:0.2px #555555;transform:scaleX(0.84);transform-origin:50% 50%;left:4.79px;">31</div><div style="position:absolute;top:598.34px;font-size:10.5px;line-height:10.5px;font-weight:400;color:#555555;white-space:pre;-webkit-text-stroke:0.2px #555555;transform:scaleX(0.84);transform-origin:50% 50%;left:4.79px;">32</div><div style="position:absolute;top:611.44px;font-size:10.5px;line-height:10.5px;font-weight:400;color:#555555;white-space:pre;-webkit-text-stroke:0.2px #555555;transform:scaleX(0.84);transform-origin:50% 50%;left:4.79px;">33</div><div style="position:absolute;top:624.55px;font-size:10.5px;line-height:10.5px;font-weight:400;color:#555555;white-space:pre;-webkit-text-stroke:0.2px #555555;transform:scaleX(0.84);transform-origin:50% 50%;left:4.79px;">34</div><div style="position:absolute;top:637.66px;font-size:10.5px;line-height:10.5px;font-weight:400;color:#555555;white-space:pre;-webkit-text-stroke:0.2px #555555;transform:scaleX(0.84);transform-origin:50% 50%;left:4.79px;">35</div><div style="position:absolute;top:650.77px;font-size:10.5px;line-height:10.5px;font-weight:400;color:#555555;white-space:pre;-webkit-text-stroke:0.2px #555555;transform:scaleX(0.84);transform-origin:50% 50%;left:4.79px;">36</div><div style="position:absolute;top:663.88px;font-size:10.5px;line-height:10.5px;font-weight:400;color:#555555;white-space:pre;-webkit-text-stroke:0.2px #555555;transform:scaleX(0.84);transform-origin:50% 50%;left:4.79px;">37</div><div style="position:absolute;top:676.98px;font-size:10.5px;line-height:10.5px;font-weight:400;color:#555555;white-space:pre;-webkit-text-stroke:0.2px #555555;transform:scaleX(0.84);transform-origin:50% 50%;left:4.79px;">38</div><div style="position:absolute;top:690.09px;font-size:10.5px;line-height:10.5px;font-weight:400;color:#555555;white-space:pre;-webkit-text-stroke:0.2px #555555;transform:scaleX(0.84);transform-origin:50% 50%;left:4.79px;">39</div><div style="position:absolute;top:703.20px;font-size:10.5px;line-height:10.5px;font-weight:400;color:#555555;white-space:pre;-webkit-text-stroke:0.2px #555555;transform:scaleX(0.84);transform-origin:50% 50%;left:4.79px;">40</div><div style="position:absolute;top:716.31px;font-size:10.5px;line-height:10.5px;font-weight:400;color:#555555;white-space:pre;-webkit-text-stroke:0.2px #555555;transform:scaleX(0.84);transform-origin:50% 50%;left:4.79px;">41</div><div style="position:absolute;top:181.98px;font-size:11.6px;line-height:11.6px;font-weight:700;color:#1E1E1E;white-space:pre;letter-spacing:0.210px;-webkit-text-stroke:0.3px #1E1E1E;left:467.20px;">SELF-EMPLOYED INCOME &amp; EXPENSE LOG</div><div style="position:absolute;top:231.12px;font-size:8.6px;line-height:8.6px;font-weight:700;color:#262626;white-space:pre;letter-spacing:0.113px;-webkit-text-stroke:0.2px #262626;left:28.30px;">Questions? Call us: 321.233.3311</div><div style="position:absolute;top:245.81px;font-size:9.2px;line-height:9.2px;font-weight:400;color:#16B2E6;white-space:pre;letter-spacing:-0.221px;-webkit-text-stroke:0.2px #16B2E6;text-decoration:underline;text-underline-offset:1px;font-weight:bold;left:28.30px;">hello@yourbluefox.com</div><div style="position:absolute;top:245.72px;font-size:8.6px;line-height:8.6px;font-weight:700;color:#262626;white-space:pre;letter-spacing:-0.211px;-webkit-text-stroke:0.2px #262626;left:247.40px;">January</div><div style="position:absolute;top:245.72px;font-size:8.6px;line-height:8.6px;font-weight:700;color:#262626;white-space:pre;letter-spacing:0.117px;-webkit-text-stroke:0.2px #262626;left:299.00px;">February</div><div style="position:absolute;top:245.72px;font-size:8.6px;line-height:8.6px;font-weight:700;color:#262626;white-space:pre;letter-spacing:0.222px;-webkit-text-stroke:0.2px #262626;left:359.35px;">March</div><div style="position:absolute;top:245.72px;font-size:8.6px;line-height:8.6px;font-weight:700;color:#262626;white-space:pre;letter-spacing:0.180px;-webkit-text-stroke:0.2px #262626;left:416.30px;">April</div><div style="position:absolute;top:245.72px;font-size:8.6px;line-height:8.6px;font-weight:700;color:#262626;white-space:pre;letter-spacing:0.641px;-webkit-text-stroke:0.2px #262626;left:471.50px;">May</div><div style="position:absolute;top:245.72px;font-size:8.6px;line-height:8.6px;font-weight:700;color:#262626;white-space:pre;letter-spacing:-0.421px;-webkit-text-stroke:0.2px #262626;left:525.05px;">June</div><div style="position:absolute;top:245.72px;font-size:8.6px;line-height:8.6px;font-weight:700;color:#262626;white-space:pre;letter-spacing:-0.434px;-webkit-text-stroke:0.2px #262626;left:580.45px;">July</div><div style="position:absolute;top:245.72px;font-size:8.6px;line-height:8.6px;font-weight:700;color:#262626;white-space:pre;letter-spacing:-0.062px;-webkit-text-stroke:0.2px #262626;left:627.85px;">August</div><div style="position:absolute;top:245.72px;font-size:8.6px;line-height:8.6px;font-weight:700;color:#262626;white-space:pre;letter-spacing:0.247px;-webkit-text-stroke:0.2px #262626;left:673.35px;">September</div><div style="position:absolute;top:245.72px;font-size:8.6px;line-height:8.6px;font-weight:700;color:#262626;white-space:pre;letter-spacing:0.158px;-webkit-text-stroke:0.2px #262626;left:733.60px;">October</div><div style="position:absolute;top:245.72px;font-size:8.6px;line-height:8.6px;font-weight:700;color:#262626;white-space:pre;letter-spacing:0.338px;-webkit-text-stroke:0.2px #262626;left:781.50px;">November</div><div style="position:absolute;top:245.72px;font-size:8.6px;line-height:8.6px;font-weight:700;color:#262626;white-space:pre;letter-spacing:0.191px;-webkit-text-stroke:0.2px #262626;left:838.35px;">December</div><div style="position:absolute;top:245.72px;font-size:8.6px;line-height:8.6px;font-weight:700;color:#262626;white-space:pre;letter-spacing:-0.065px;-webkit-text-stroke:0.2px #262626;left:906.25px;">TOTAL</div><div style="position:absolute;top:272.04px;font-size:8.6px;line-height:8.6px;font-weight:700;color:#262626;white-space:pre;letter-spacing:0.021px;-webkit-text-stroke:0.2px #262626;left:24.90px;">Income</div><div style="position:absolute;top:285.14px;font-size:9.2px;line-height:9.2px;font-weight:400;color:#262626;white-space:pre;letter-spacing:-0.018px;-webkit-text-stroke:0.2px #262626;left:28.60px;">1099</div><div style="position:absolute;top:298.25px;font-size:9.2px;line-height:9.2px;font-weight:400;color:#262626;white-space:pre;letter-spacing:0.123px;-webkit-text-stroke:0.2px #262626;left:28.30px;">Other (business bank account interest, etc.)</div><div style="position:absolute;top:311.37px;font-size:8.6px;line-height:8.6px;font-weight:700;color:#262626;white-space:pre;letter-spacing:0.084px;-webkit-text-stroke:0.2px #262626;left:24.90px;">Total Income</div><div style="position:absolute;top:337.58px;font-size:8.6px;line-height:8.6px;font-weight:700;color:#262626;white-space:pre;letter-spacing:-0.320px;-webkit-text-stroke:0.2px #262626;left:24.90px;">Expenses</div><div style="position:absolute;top:350.68px;font-size:9.2px;line-height:9.2px;font-weight:400;color:#262626;white-space:pre;letter-spacing:-0.131px;-webkit-text-stroke:0.2px #262626;left:31.30px;">Accounting Fees</div><div style="position:absolute;top:363.79px;font-size:9.2px;line-height:9.2px;font-weight:400;color:#262626;white-space:pre;letter-spacing:0.235px;-webkit-text-stroke:0.2px #262626;left:31.30px;">Advertising &amp; Marketing</div><div style="position:absolute;top:376.90px;font-size:9.2px;line-height:9.2px;font-weight:400;color:#262626;white-space:pre;letter-spacing:0.250px;-webkit-text-stroke:0.2px #262626;width:205px;overflow:hidden;left:31.30px;">Automobile Mileage Driven for Business Purpose</div><div style="position:absolute;top:390.01px;font-size:9.2px;line-height:9.2px;font-weight:400;color:#262626;white-space:pre;letter-spacing:-0.403px;-webkit-text-stroke:0.2px #262626;left:31.30px;">Bank Fees</div><div style="position:absolute;top:403.12px;font-size:9.2px;line-height:9.2px;font-weight:400;color:#262626;white-space:pre;letter-spacing:0.082px;-webkit-text-stroke:0.2px #262626;left:31.30px;">Business Credit Card Interest</div><div style="position:absolute;top:416.22px;font-size:9.2px;line-height:9.2px;font-weight:400;color:#262626;white-space:pre;letter-spacing:0.001px;-webkit-text-stroke:0.2px #262626;left:31.30px;">Business Licenses &amp; Permits</div><div style="position:absolute;top:429.33px;font-size:9.2px;line-height:9.2px;font-weight:400;color:#262626;white-space:pre;letter-spacing:0.087px;-webkit-text-stroke:0.2px #262626;left:31.30px;">Client Gifts</div><div style="position:absolute;top:442.44px;font-size:9.2px;line-height:9.2px;font-weight:400;color:#262626;white-space:pre;letter-spacing:0.049px;-webkit-text-stroke:0.2px #262626;left:31.30px;">Computer Supplies/Service</div><div style="position:absolute;top:455.55px;font-size:9.2px;line-height:9.2px;font-weight:400;color:#262626;white-space:pre;letter-spacing:0.252px;-webkit-text-stroke:0.2px #262626;left:31.30px;">Continuing Education/Training</div><div style="position:absolute;top:468.66px;font-size:9.2px;line-height:9.2px;font-weight:400;color:#262626;white-space:pre;letter-spacing:-0.039px;-webkit-text-stroke:0.2px #262626;left:31.30px;">Dues &amp; Membership Fees</div><div style="position:absolute;top:481.76px;font-size:9.2px;line-height:9.2px;font-weight:400;color:#262626;white-space:pre;letter-spacing:0.111px;-webkit-text-stroke:0.2px #262626;left:31.30px;">Office Supplies</div><div style="position:absolute;top:494.87px;font-size:9.2px;line-height:9.2px;font-weight:400;color:#262626;white-space:pre;letter-spacing:-0.430px;-webkit-text-stroke:0.2px #262626;left:31.30px;">Legal Fees</div><div style="position:absolute;top:507.98px;font-size:9.2px;line-height:9.2px;font-weight:400;color:#262626;white-space:pre;letter-spacing:0.269px;-webkit-text-stroke:0.2px #262626;left:31.30px;">Meals/Entertainment</div><div style="position:absolute;top:521.09px;font-size:9.2px;line-height:9.2px;font-weight:400;color:#262626;white-space:pre;letter-spacing:0.040px;-webkit-text-stroke:0.2px #262626;left:31.30px;">Postage and Delivery</div><div style="position:absolute;top:534.20px;font-size:9.2px;line-height:9.2px;font-weight:400;color:#262626;white-space:pre;letter-spacing:0.120px;-webkit-text-stroke:0.2px #262626;left:31.30px;">Uniforms - Purchase &amp; Cleaning</div><div style="position:absolute;top:547.30px;font-size:9.2px;line-height:9.2px;font-weight:400;color:#262626;white-space:pre;letter-spacing:0.012px;-webkit-text-stroke:0.2px #262626;left:31.30px;">Telephone</div><div style="position:absolute;top:560.41px;font-size:9.2px;line-height:9.2px;font-weight:400;color:#262626;white-space:pre;letter-spacing:0.139px;-webkit-text-stroke:0.2px #262626;left:31.30px;">Sponsorships</div><div style="position:absolute;top:573.52px;font-size:9.2px;line-height:9.2px;font-weight:400;color:#262626;white-space:pre;letter-spacing:0.082px;-webkit-text-stroke:0.2px #262626;left:31.30px;">Travel (Airfare, Hotel, etc.)</div><div style="position:absolute;top:586.63px;font-size:9.2px;line-height:9.2px;font-weight:400;color:#262626;white-space:pre;letter-spacing:0.158px;-webkit-text-stroke:0.2px #262626;left:31.30px;">Miscellaneous- Phone</div><div style="position:absolute;top:599.74px;font-size:9.2px;line-height:9.2px;font-weight:400;color:#262626;white-space:pre;letter-spacing:0.260px;-webkit-text-stroke:0.2px #262626;left:31.30px;">Miscellaneous- Internet</div><div style="position:absolute;top:612.85px;font-size:8.6px;line-height:8.6px;font-weight:700;color:#262626;white-space:pre;letter-spacing:-0.116px;-webkit-text-stroke:0.2px #262626;left:25.00px;">Total Expenses</div><div style="position:absolute;top:639.07px;font-size:8.6px;line-height:8.6px;font-weight:700;color:#262626;white-space:pre;letter-spacing:0.062px;-webkit-text-stroke:0.2px #262626;left:25.00px;">Net Income (Income - Expenses)</div><div style="position:absolute;top:311.37px;font-size:8.6px;line-height:8.6px;font-weight:700;color:#262626;white-space:pre;-webkit-text-stroke:0.2px #262626;left:242.40px;">$</div><div style="position:absolute;top:311.37px;font-size:8.6px;line-height:8.6px;font-weight:700;color:#262626;white-space:pre;-webkit-text-stroke:0.2px #262626;left:271.73px;">-</div><div style="position:absolute;top:311.37px;font-size:8.6px;line-height:8.6px;font-weight:700;color:#262626;white-space:pre;-webkit-text-stroke:0.2px #262626;left:296.10px;">$</div><div style="position:absolute;top:311.37px;font-size:8.6px;line-height:8.6px;font-weight:700;color:#262626;white-space:pre;-webkit-text-stroke:0.2px #262626;left:327.12px;">-</div><div style="position:absolute;top:311.37px;font-size:8.6px;line-height:8.6px;font-weight:700;color:#262626;white-space:pre;-webkit-text-stroke:0.2px #262626;left:351.50px;">$</div><div style="position:absolute;top:311.37px;font-size:8.6px;line-height:8.6px;font-weight:700;color:#262626;white-space:pre;-webkit-text-stroke:0.2px #262626;left:381.02px;">-</div><div style="position:absolute;top:311.37px;font-size:8.6px;line-height:8.6px;font-weight:700;color:#262626;white-space:pre;-webkit-text-stroke:0.2px #262626;left:405.40px;">$</div><div style="position:absolute;top:311.37px;font-size:8.6px;line-height:8.6px;font-weight:700;color:#262626;white-space:pre;-webkit-text-stroke:0.2px #262626;left:435.12px;">-</div><div style="position:absolute;top:311.37px;font-size:8.6px;line-height:8.6px;font-weight:700;color:#262626;white-space:pre;-webkit-text-stroke:0.2px #262626;left:459.50px;">$</div><div style="position:absolute;top:311.37px;font-size:8.6px;line-height:8.6px;font-weight:700;color:#262626;white-space:pre;-webkit-text-stroke:0.2px #262626;left:489.12px;">-</div><div style="position:absolute;top:311.37px;font-size:8.6px;line-height:8.6px;font-weight:700;color:#262626;white-space:pre;-webkit-text-stroke:0.2px #262626;left:513.50px;">$</div><div style="position:absolute;top:311.37px;font-size:8.6px;line-height:8.6px;font-weight:700;color:#262626;white-space:pre;-webkit-text-stroke:0.2px #262626;left:543.02px;">-</div><div style="position:absolute;top:311.37px;font-size:8.6px;line-height:8.6px;font-weight:700;color:#262626;white-space:pre;-webkit-text-stroke:0.2px #262626;left:567.40px;">$</div><div style="position:absolute;top:311.37px;font-size:8.6px;line-height:8.6px;font-weight:700;color:#262626;white-space:pre;-webkit-text-stroke:0.2px #262626;left:597.02px;">-</div><div style="position:absolute;top:311.37px;font-size:8.6px;line-height:8.6px;font-weight:700;color:#262626;white-space:pre;-webkit-text-stroke:0.2px #262626;left:621.40px;">$</div><div style="position:absolute;top:311.37px;font-size:8.6px;line-height:8.6px;font-weight:700;color:#262626;white-space:pre;-webkit-text-stroke:0.2px #262626;left:651.23px;">-</div><div style="position:absolute;top:311.37px;font-size:8.6px;line-height:8.6px;font-weight:700;color:#262626;white-space:pre;-webkit-text-stroke:0.2px #262626;left:675.60px;">$</div><div style="position:absolute;top:311.37px;font-size:8.6px;line-height:8.6px;font-weight:700;color:#262626;white-space:pre;-webkit-text-stroke:0.2px #262626;left:705.12px;">-</div><div style="position:absolute;top:311.37px;font-size:8.6px;line-height:8.6px;font-weight:700;color:#262626;white-space:pre;-webkit-text-stroke:0.2px #262626;left:729.50px;">$</div><div style="position:absolute;top:311.37px;font-size:8.6px;line-height:8.6px;font-weight:700;color:#262626;white-space:pre;-webkit-text-stroke:0.2px #262626;left:759.23px;">-</div><div style="position:absolute;top:311.37px;font-size:8.6px;line-height:8.6px;font-weight:700;color:#262626;white-space:pre;-webkit-text-stroke:0.2px #262626;left:783.60px;">$</div><div style="position:absolute;top:311.37px;font-size:8.6px;line-height:8.6px;font-weight:700;color:#262626;white-space:pre;-webkit-text-stroke:0.2px #262626;left:811.42px;">-</div><div style="position:absolute;top:311.37px;font-size:8.6px;line-height:8.6px;font-weight:700;color:#262626;white-space:pre;-webkit-text-stroke:0.2px #262626;left:835.80px;">$</div><div style="position:absolute;top:311.37px;font-size:8.6px;line-height:8.6px;font-weight:700;color:#262626;white-space:pre;-webkit-text-stroke:0.2px #262626;left:871.42px;">-</div><div style="position:absolute;top:311.37px;font-size:8.6px;line-height:8.6px;font-weight:700;color:#262626;white-space:pre;-webkit-text-stroke:0.2px #262626;left:895.80px;">$</div><div style="position:absolute;top:311.37px;font-size:8.6px;line-height:8.6px;font-weight:700;color:#262626;white-space:pre;-webkit-text-stroke:0.2px #262626;left:931.92px;">-</div><div style="position:absolute;top:612.85px;font-size:8.6px;line-height:8.6px;font-weight:700;color:#262626;white-space:pre;-webkit-text-stroke:0.2px #262626;left:242.40px;">$</div><div style="position:absolute;top:612.85px;font-size:8.6px;line-height:8.6px;font-weight:700;color:#262626;white-space:pre;-webkit-text-stroke:0.2px #262626;left:271.73px;">-</div><div style="position:absolute;top:612.85px;font-size:8.6px;line-height:8.6px;font-weight:700;color:#262626;white-space:pre;-webkit-text-stroke:0.2px #262626;left:296.10px;">$</div><div style="position:absolute;top:612.85px;font-size:8.6px;line-height:8.6px;font-weight:700;color:#262626;white-space:pre;-webkit-text-stroke:0.2px #262626;left:327.12px;">-</div><div style="position:absolute;top:612.85px;font-size:8.6px;line-height:8.6px;font-weight:700;color:#262626;white-space:pre;-webkit-text-stroke:0.2px #262626;left:351.50px;">$</div><div style="position:absolute;top:612.85px;font-size:8.6px;line-height:8.6px;font-weight:700;color:#262626;white-space:pre;-webkit-text-stroke:0.2px #262626;left:381.02px;">-</div><div style="position:absolute;top:612.85px;font-size:8.6px;line-height:8.6px;font-weight:700;color:#262626;white-space:pre;-webkit-text-stroke:0.2px #262626;left:405.40px;">$</div><div style="position:absolute;top:612.85px;font-size:8.6px;line-height:8.6px;font-weight:700;color:#262626;white-space:pre;-webkit-text-stroke:0.2px #262626;left:435.12px;">-</div><div style="position:absolute;top:612.85px;font-size:8.6px;line-height:8.6px;font-weight:700;color:#262626;white-space:pre;-webkit-text-stroke:0.2px #262626;left:459.50px;">$</div><div style="position:absolute;top:612.85px;font-size:8.6px;line-height:8.6px;font-weight:700;color:#262626;white-space:pre;-webkit-text-stroke:0.2px #262626;left:489.12px;">-</div><div style="position:absolute;top:612.85px;font-size:8.6px;line-height:8.6px;font-weight:700;color:#262626;white-space:pre;-webkit-text-stroke:0.2px #262626;left:513.50px;">$</div><div style="position:absolute;top:612.85px;font-size:8.6px;line-height:8.6px;font-weight:700;color:#262626;white-space:pre;-webkit-text-stroke:0.2px #262626;left:543.02px;">-</div><div style="position:absolute;top:612.85px;font-size:8.6px;line-height:8.6px;font-weight:700;color:#262626;white-space:pre;-webkit-text-stroke:0.2px #262626;left:567.40px;">$</div><div style="position:absolute;top:612.85px;font-size:8.6px;line-height:8.6px;font-weight:700;color:#262626;white-space:pre;-webkit-text-stroke:0.2px #262626;left:597.02px;">-</div><div style="position:absolute;top:612.85px;font-size:8.6px;line-height:8.6px;font-weight:700;color:#262626;white-space:pre;-webkit-text-stroke:0.2px #262626;left:621.40px;">$</div><div style="position:absolute;top:612.85px;font-size:8.6px;line-height:8.6px;font-weight:700;color:#262626;white-space:pre;-webkit-text-stroke:0.2px #262626;left:651.23px;">-</div><div style="position:absolute;top:612.85px;font-size:8.6px;line-height:8.6px;font-weight:700;color:#262626;white-space:pre;-webkit-text-stroke:0.2px #262626;left:675.60px;">$</div><div style="position:absolute;top:612.85px;font-size:8.6px;line-height:8.6px;font-weight:700;color:#262626;white-space:pre;-webkit-text-stroke:0.2px #262626;left:705.12px;">-</div><div style="position:absolute;top:612.85px;font-size:8.6px;line-height:8.6px;font-weight:700;color:#262626;white-space:pre;-webkit-text-stroke:0.2px #262626;left:729.50px;">$</div><div style="position:absolute;top:612.85px;font-size:8.6px;line-height:8.6px;font-weight:700;color:#262626;white-space:pre;-webkit-text-stroke:0.2px #262626;left:759.23px;">-</div><div style="position:absolute;top:612.85px;font-size:8.6px;line-height:8.6px;font-weight:700;color:#262626;white-space:pre;-webkit-text-stroke:0.2px #262626;left:783.60px;">$</div><div style="position:absolute;top:612.85px;font-size:8.6px;line-height:8.6px;font-weight:700;color:#262626;white-space:pre;-webkit-text-stroke:0.2px #262626;left:811.42px;">-</div><div style="position:absolute;top:612.85px;font-size:8.6px;line-height:8.6px;font-weight:700;color:#262626;white-space:pre;-webkit-text-stroke:0.2px #262626;left:835.80px;">$</div><div style="position:absolute;top:612.85px;font-size:8.6px;line-height:8.6px;font-weight:700;color:#262626;white-space:pre;-webkit-text-stroke:0.2px #262626;left:871.42px;">-</div><div style="position:absolute;top:612.85px;font-size:8.6px;line-height:8.6px;font-weight:700;color:#262626;white-space:pre;-webkit-text-stroke:0.2px #262626;left:895.80px;">$</div><div style="position:absolute;top:612.85px;font-size:8.6px;line-height:8.6px;font-weight:700;color:#262626;white-space:pre;-webkit-text-stroke:0.2px #262626;left:931.92px;">-</div><div style="position:absolute;top:639.07px;font-size:8.6px;line-height:8.6px;font-weight:700;color:#262626;white-space:pre;-webkit-text-stroke:0.2px #262626;left:242.40px;">$</div><div style="position:absolute;top:639.07px;font-size:8.6px;line-height:8.6px;font-weight:700;color:#262626;white-space:pre;-webkit-text-stroke:0.2px #262626;left:271.73px;">-</div><div style="position:absolute;top:639.07px;font-size:8.6px;line-height:8.6px;font-weight:700;color:#262626;white-space:pre;-webkit-text-stroke:0.2px #262626;left:296.10px;">$</div><div style="position:absolute;top:639.07px;font-size:8.6px;line-height:8.6px;font-weight:700;color:#262626;white-space:pre;-webkit-text-stroke:0.2px #262626;left:327.12px;">-</div><div style="position:absolute;top:639.07px;font-size:8.6px;line-height:8.6px;font-weight:700;color:#262626;white-space:pre;-webkit-text-stroke:0.2px #262626;left:351.50px;">$</div><div style="position:absolute;top:639.07px;font-size:8.6px;line-height:8.6px;font-weight:700;color:#262626;white-space:pre;-webkit-text-stroke:0.2px #262626;left:381.02px;">-</div><div style="position:absolute;top:639.07px;font-size:8.6px;line-height:8.6px;font-weight:700;color:#262626;white-space:pre;-webkit-text-stroke:0.2px #262626;left:405.40px;">$</div><div style="position:absolute;top:639.07px;font-size:8.6px;line-height:8.6px;font-weight:700;color:#262626;white-space:pre;-webkit-text-stroke:0.2px #262626;left:435.12px;">-</div><div style="position:absolute;top:639.07px;font-size:8.6px;line-height:8.6px;font-weight:700;color:#262626;white-space:pre;-webkit-text-stroke:0.2px #262626;left:459.50px;">$</div><div style="position:absolute;top:639.07px;font-size:8.6px;line-height:8.6px;font-weight:700;color:#262626;white-space:pre;-webkit-text-stroke:0.2px #262626;left:489.12px;">-</div><div style="position:absolute;top:639.07px;font-size:8.6px;line-height:8.6px;font-weight:700;color:#262626;white-space:pre;-webkit-text-stroke:0.2px #262626;left:513.50px;">$</div><div style="position:absolute;top:639.07px;font-size:8.6px;line-height:8.6px;font-weight:700;color:#262626;white-space:pre;-webkit-text-stroke:0.2px #262626;left:543.02px;">-</div><div style="position:absolute;top:639.07px;font-size:8.6px;line-height:8.6px;font-weight:700;color:#262626;white-space:pre;-webkit-text-stroke:0.2px #262626;left:567.40px;">$</div><div style="position:absolute;top:639.07px;font-size:8.6px;line-height:8.6px;font-weight:700;color:#262626;white-space:pre;-webkit-text-stroke:0.2px #262626;left:597.02px;">-</div><div style="position:absolute;top:639.07px;font-size:8.6px;line-height:8.6px;font-weight:700;color:#262626;white-space:pre;-webkit-text-stroke:0.2px #262626;left:621.40px;">$</div><div style="position:absolute;top:639.07px;font-size:8.6px;line-height:8.6px;font-weight:700;color:#262626;white-space:pre;-webkit-text-stroke:0.2px #262626;left:651.23px;">-</div><div style="position:absolute;top:639.07px;font-size:8.6px;line-height:8.6px;font-weight:700;color:#262626;white-space:pre;-webkit-text-stroke:0.2px #262626;left:675.60px;">$</div><div style="position:absolute;top:639.07px;font-size:8.6px;line-height:8.6px;font-weight:700;color:#262626;white-space:pre;-webkit-text-stroke:0.2px #262626;left:705.12px;">-</div><div style="position:absolute;top:639.07px;font-size:8.6px;line-height:8.6px;font-weight:700;color:#262626;white-space:pre;-webkit-text-stroke:0.2px #262626;left:729.50px;">$</div><div style="position:absolute;top:639.07px;font-size:8.6px;line-height:8.6px;font-weight:700;color:#262626;white-space:pre;-webkit-text-stroke:0.2px #262626;left:759.23px;">-</div><div style="position:absolute;top:639.07px;font-size:8.6px;line-height:8.6px;font-weight:700;color:#262626;white-space:pre;-webkit-text-stroke:0.2px #262626;left:783.60px;">$</div><div style="position:absolute;top:639.07px;font-size:8.6px;line-height:8.6px;font-weight:700;color:#262626;white-space:pre;-webkit-text-stroke:0.2px #262626;left:811.42px;">-</div><div style="position:absolute;top:639.07px;font-size:8.6px;line-height:8.6px;font-weight:700;color:#262626;white-space:pre;-webkit-text-stroke:0.2px #262626;left:835.80px;">$</div><div style="position:absolute;top:639.07px;font-size:8.6px;line-height:8.6px;font-weight:700;color:#262626;white-space:pre;-webkit-text-stroke:0.2px #262626;left:871.42px;">-</div><div style="position:absolute;top:639.07px;font-size:8.6px;line-height:8.6px;font-weight:700;color:#262626;white-space:pre;-webkit-text-stroke:0.2px #262626;left:895.80px;">$</div><div style="position:absolute;top:639.07px;font-size:8.6px;line-height:8.6px;font-weight:700;color:#262626;white-space:pre;-webkit-text-stroke:0.2px #262626;left:931.92px;">-</div><div style="position:absolute;top:285.14px;font-size:9.2px;line-height:9.2px;font-weight:400;color:#262626;white-space:pre;-webkit-text-stroke:0.2px #262626;left:895.80px;">$</div><div style="position:absolute;top:285.14px;font-size:9.2px;line-height:9.2px;font-weight:400;color:#262626;white-space:pre;-webkit-text-stroke:0.2px #262626;left:931.74px;">-</div><div style="position:absolute;top:298.25px;font-size:9.2px;line-height:9.2px;font-weight:400;color:#262626;white-space:pre;-webkit-text-stroke:0.2px #262626;left:895.80px;">$</div><div style="position:absolute;top:298.25px;font-size:9.2px;line-height:9.2px;font-weight:400;color:#262626;white-space:pre;-webkit-text-stroke:0.2px #262626;left:931.74px;">-</div><div style="position:absolute;top:350.68px;font-size:9.2px;line-height:9.2px;font-weight:400;color:#262626;white-space:pre;-webkit-text-stroke:0.2px #262626;left:895.80px;">$</div><div style="position:absolute;top:350.68px;font-size:9.2px;line-height:9.2px;font-weight:400;color:#262626;white-space:pre;-webkit-text-stroke:0.2px #262626;left:931.74px;">-</div><div style="position:absolute;top:363.79px;font-size:9.2px;line-height:9.2px;font-weight:400;color:#262626;white-space:pre;-webkit-text-stroke:0.2px #262626;left:895.80px;">$</div><div style="position:absolute;top:363.79px;font-size:9.2px;line-height:9.2px;font-weight:400;color:#262626;white-space:pre;-webkit-text-stroke:0.2px #262626;left:931.74px;">-</div><div style="position:absolute;top:376.90px;font-size:9.2px;line-height:9.2px;font-weight:400;color:#262626;white-space:pre;-webkit-text-stroke:0.2px #262626;left:895.80px;">$</div><div style="position:absolute;top:376.90px;font-size:9.2px;line-height:9.2px;font-weight:400;color:#262626;white-space:pre;-webkit-text-stroke:0.2px #262626;left:931.74px;">-</div><div style="position:absolute;top:390.01px;font-size:9.2px;line-height:9.2px;font-weight:400;color:#262626;white-space:pre;-webkit-text-stroke:0.2px #262626;left:895.80px;">$</div><div style="position:absolute;top:390.01px;font-size:9.2px;line-height:9.2px;font-weight:400;color:#262626;white-space:pre;-webkit-text-stroke:0.2px #262626;left:931.74px;">-</div><div style="position:absolute;top:403.12px;font-size:9.2px;line-height:9.2px;font-weight:400;color:#262626;white-space:pre;-webkit-text-stroke:0.2px #262626;left:895.80px;">$</div><div style="position:absolute;top:403.12px;font-size:9.2px;line-height:9.2px;font-weight:400;color:#262626;white-space:pre;-webkit-text-stroke:0.2px #262626;left:931.74px;">-</div><div style="position:absolute;top:416.22px;font-size:9.2px;line-height:9.2px;font-weight:400;color:#262626;white-space:pre;-webkit-text-stroke:0.2px #262626;left:895.80px;">$</div><div style="position:absolute;top:416.22px;font-size:9.2px;line-height:9.2px;font-weight:400;color:#262626;white-space:pre;-webkit-text-stroke:0.2px #262626;left:931.74px;">-</div><div style="position:absolute;top:429.33px;font-size:9.2px;line-height:9.2px;font-weight:400;color:#262626;white-space:pre;-webkit-text-stroke:0.2px #262626;left:895.80px;">$</div><div style="position:absolute;top:429.33px;font-size:9.2px;line-height:9.2px;font-weight:400;color:#262626;white-space:pre;-webkit-text-stroke:0.2px #262626;left:931.74px;">-</div><div style="position:absolute;top:442.44px;font-size:9.2px;line-height:9.2px;font-weight:400;color:#262626;white-space:pre;-webkit-text-stroke:0.2px #262626;left:895.80px;">$</div><div style="position:absolute;top:442.44px;font-size:9.2px;line-height:9.2px;font-weight:400;color:#262626;white-space:pre;-webkit-text-stroke:0.2px #262626;left:931.74px;">-</div><div style="position:absolute;top:455.55px;font-size:9.2px;line-height:9.2px;font-weight:400;color:#262626;white-space:pre;-webkit-text-stroke:0.2px #262626;left:895.80px;">$</div><div style="position:absolute;top:455.55px;font-size:9.2px;line-height:9.2px;font-weight:400;color:#262626;white-space:pre;-webkit-text-stroke:0.2px #262626;left:931.74px;">-</div><div style="position:absolute;top:468.66px;font-size:9.2px;line-height:9.2px;font-weight:400;color:#262626;white-space:pre;-webkit-text-stroke:0.2px #262626;left:895.80px;">$</div><div style="position:absolute;top:468.66px;font-size:9.2px;line-height:9.2px;font-weight:400;color:#262626;white-space:pre;-webkit-text-stroke:0.2px #262626;left:931.74px;">-</div><div style="position:absolute;top:481.76px;font-size:9.2px;line-height:9.2px;font-weight:400;color:#262626;white-space:pre;-webkit-text-stroke:0.2px #262626;left:895.80px;">$</div><div style="position:absolute;top:481.76px;font-size:9.2px;line-height:9.2px;font-weight:400;color:#262626;white-space:pre;-webkit-text-stroke:0.2px #262626;left:931.74px;">-</div><div style="position:absolute;top:494.87px;font-size:9.2px;line-height:9.2px;font-weight:400;color:#262626;white-space:pre;-webkit-text-stroke:0.2px #262626;left:895.80px;">$</div><div style="position:absolute;top:494.87px;font-size:9.2px;line-height:9.2px;font-weight:400;color:#262626;white-space:pre;-webkit-text-stroke:0.2px #262626;left:931.74px;">-</div><div style="position:absolute;top:507.98px;font-size:9.2px;line-height:9.2px;font-weight:400;color:#262626;white-space:pre;-webkit-text-stroke:0.2px #262626;left:895.80px;">$</div><div style="position:absolute;top:507.98px;font-size:9.2px;line-height:9.2px;font-weight:400;color:#262626;white-space:pre;-webkit-text-stroke:0.2px #262626;left:931.74px;">-</div><div style="position:absolute;top:521.09px;font-size:9.2px;line-height:9.2px;font-weight:400;color:#262626;white-space:pre;-webkit-text-stroke:0.2px #262626;left:895.80px;">$</div><div style="position:absolute;top:521.09px;font-size:9.2px;line-height:9.2px;font-weight:400;color:#262626;white-space:pre;-webkit-text-stroke:0.2px #262626;left:931.74px;">-</div><div style="position:absolute;top:534.20px;font-size:9.2px;line-height:9.2px;font-weight:400;color:#262626;white-space:pre;-webkit-text-stroke:0.2px #262626;left:895.80px;">$</div><div style="position:absolute;top:534.20px;font-size:9.2px;line-height:9.2px;font-weight:400;color:#262626;white-space:pre;-webkit-text-stroke:0.2px #262626;left:931.74px;">-</div><div style="position:absolute;top:547.30px;font-size:9.2px;line-height:9.2px;font-weight:400;color:#262626;white-space:pre;-webkit-text-stroke:0.2px #262626;left:895.80px;">$</div><div style="position:absolute;top:547.30px;font-size:9.2px;line-height:9.2px;font-weight:400;color:#262626;white-space:pre;-webkit-text-stroke:0.2px #262626;left:931.74px;">-</div><div style="position:absolute;top:560.41px;font-size:9.2px;line-height:9.2px;font-weight:400;color:#262626;white-space:pre;-webkit-text-stroke:0.2px #262626;left:895.80px;">$</div><div style="position:absolute;top:560.41px;font-size:9.2px;line-height:9.2px;font-weight:400;color:#262626;white-space:pre;-webkit-text-stroke:0.2px #262626;left:931.74px;">-</div><div style="position:absolute;top:573.52px;font-size:9.2px;line-height:9.2px;font-weight:400;color:#262626;white-space:pre;-webkit-text-stroke:0.2px #262626;left:895.80px;">$</div><div style="position:absolute;top:573.52px;font-size:9.2px;line-height:9.2px;font-weight:400;color:#262626;white-space:pre;-webkit-text-stroke:0.2px #262626;left:931.74px;">-</div><div style="position:absolute;top:586.63px;font-size:9.2px;line-height:9.2px;font-weight:400;color:#262626;white-space:pre;-webkit-text-stroke:0.2px #262626;left:895.80px;">$</div><div style="position:absolute;top:586.63px;font-size:9.2px;line-height:9.2px;font-weight:400;color:#262626;white-space:pre;-webkit-text-stroke:0.2px #262626;left:931.74px;">-</div><div style="position:absolute;top:599.74px;font-size:9.2px;line-height:9.2px;font-weight:400;color:#262626;white-space:pre;-webkit-text-stroke:0.2px #262626;left:895.80px;">$</div><div style="position:absolute;top:599.74px;font-size:9.2px;line-height:9.2px;font-weight:400;color:#262626;white-space:pre;-webkit-text-stroke:0.2px #262626;left:931.74px;">-</div><div style="position:absolute;top:665.28px;font-size:8.6px;line-height:8.6px;font-weight:700;color:#262626;white-space:pre;letter-spacing:0.158px;-webkit-text-stroke:0.2px #262626;left:318.85px;">Home Office</div><div style="position:absolute;top:678.38px;font-size:9.2px;line-height:9.2px;font-weight:400;color:#4A78C2;white-space:pre;letter-spacing:0.042px;-webkit-text-stroke:0.2px #4A78C2;left:246.60px;">Total Home Office Square Footage</div><div style="position:absolute;top:691.49px;font-size:9.2px;line-height:9.2px;font-weight:400;color:#4A78C2;white-space:pre;letter-spacing:-0.005px;-webkit-text-stroke:0.2px #4A78C2;left:260.50px;">Total Home Square Footage</div><div style="position:absolute;top:665.28px;font-size:8.6px;line-height:8.6px;font-weight:700;color:#262626;white-space:pre;letter-spacing:0.078px;-webkit-text-stroke:0.2px #262626;left:563.05px;">Auto Details</div><div style="position:absolute;top:678.38px;font-size:9.2px;line-height:9.2px;font-weight:400;color:#19A862;white-space:pre;letter-spacing:0.198px;-webkit-text-stroke:0.2px #19A862;left:517.95px;">Total Business Miles</div><div style="position:absolute;top:691.49px;font-size:9.2px;line-height:9.2px;font-weight:400;color:#19A862;white-space:pre;letter-spacing:0.265px;-webkit-text-stroke:0.2px #19A862;left:522.95px;">Total Miles Driven</div><div style="position:absolute;top:665.28px;font-size:8.6px;line-height:8.6px;font-weight:700;color:#262626;white-space:pre;letter-spacing:0.194px;-webkit-text-stroke:0.2px #262626;left:797.05px;">Other Notes for Us</div><div style="position:absolute;top:188.52px;font-size:21.6px;line-height:21.6px;font-weight:700;color:#111;white-space:pre;letter-spacing:2.068px;-webkit-text-stroke:1px #111;left:28.00px;">BLUE</div><div style="position:absolute;top:188.52px;font-size:21.6px;line-height:21.6px;font-weight:700;color:#111;white-space:pre;letter-spacing:-2.203px;-webkit-text-stroke:1px #111;left:102.40px;">F</div><div style="position:absolute;top:188.52px;font-size:21.6px;line-height:21.6px;font-weight:700;color:#111;white-space:pre;letter-spacing:1.094px;-webkit-text-stroke:1px #111;left:136.60px;">X</div><svg style="position:absolute;left:95px;top:185px" width="46" height="36" viewBox="0 0 46 36">
<path d="M22.3 4.1 L26.5 6.7 L35 6.7 L39.3 4.1 L41.4 11.9 L42.4 15.5 L43.5 21.7 Q43.8 28 41.4 30 Q37 33.5 31 33.1 L15.5 31.6 Q10 31.8 3.1 32.6 Q6 26 10 22 Q14 19.5 20.7 19.2 L19.7 15.5 L20.7 11.9 Z" fill="#19A9E3"/>
<path d="M3.6 31.8 Q6.5 26 10.3 22.8 Q14 20.3 20 20 L19 22 L17 23 L18.2 24.6 L15 26 L15.8 27.6 L12 29.2 Q8 30.2 3.6 31.8 Z" fill="#fff"/>
<path d="M19.3 13.8 Q25 15 29.5 23.2 L30.5 24 L26.5 23 Q21 20 19.3 15.8 Z M42.6 13.8 Q37 15 31.5 23.2 L30.5 24 L34.5 23 Q40 20 42.6 15.8 Z" fill="#fff"/>
<circle cx="25.4" cy="17.9" r="1.1" fill="#4A3A2A"/><circle cx="36.2" cy="17.9" r="1.1" fill="#4A3A2A"/>
</svg><div style="position:absolute;top:211.19px;font-size:11px;line-height:11px;font-weight:700;color:#1AA7E1;white-space:pre;letter-spacing:-1.670px;font-style:italic;left:28.70px;">Agile Accounting</div>
</body></html>
